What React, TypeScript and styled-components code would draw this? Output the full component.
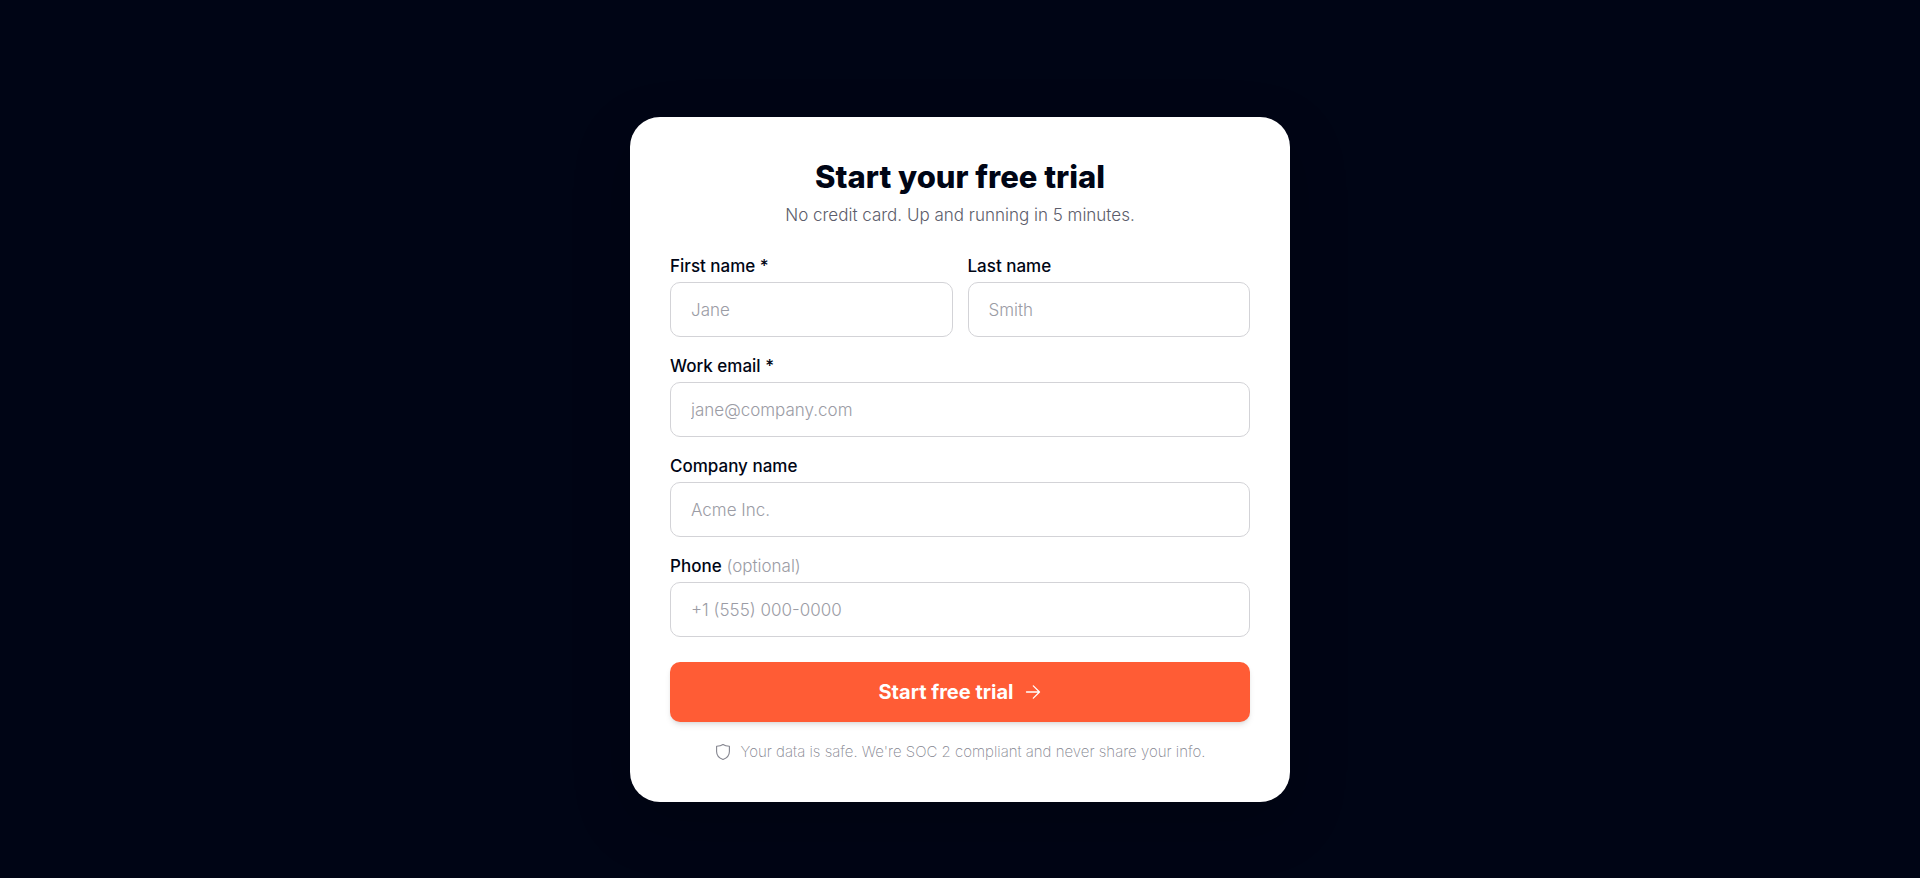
import React from "react";
import styled, { createGlobalStyle } from "styled-components";

const GlobalStyle = createGlobalStyle`
  *, *::before, *::after { box-sizing: border-box; }
  body {
    margin: 0;
    background: #000515;
    color: #000515;
    font-family: Inter, "Liberation Sans", sans-serif;
  }
`;

const Page = styled.main`
  min-height: 100vh;
  padding: 117px 24px 76px;
`;

const Card = styled.form`
  display: flex;
  flex-direction: column;
  width: 100%;
  max-width: 660px;
  margin: 0 auto;
  padding: 40px;
  border-radius: 30px;
  background: #fff;
  box-shadow: 0 20px 60px rgba(0, 0, 0, 0.2);
`;

const Title = styled.h1`
  margin: 0;
  font-size: 31px;
  font-weight: 800;
  line-height: 40px;
  text-align: center;
`;

const Subtitle = styled.p`
  margin: 6px 0 25px;
  font-size: 17px;
  font-weight: 300;
  line-height: 24px;
  text-align: center;
  color: #5c5d6b;
`;

const Fields = styled.div`
  display: grid;
  grid-template-columns: 1fr 1fr;
  gap: 15px;
`;

const Field = styled.div<{ $wide?: boolean }>`
  display: flex;
  flex-direction: column;
  gap: 2px;
  grid-column: ${(p) => (p.$wide ? "1 / -1" : "auto")};
`;

const Label = styled.label`
  font-size: 17px;
  font-weight: 500;
  line-height: 28px;
`;

const Optional = styled.span`
  font-weight: 300;
  color: #9b9ca5;
`;

const Input = styled.input`
  width: 100%;
  height: 55px;
  padding: 0 20px;
  border: 1px solid #d3d3d7;
  border-radius: 10px;
  background: #fff;
  color: inherit;
  font-family: inherit;
  font-size: 17px;
  font-weight: 300;

  &::placeholder { color: #9b9ca5; opacity: 1; }
`;

const SubmitButton = styled.button`
  display: flex;
  align-items: center;
  justify-content: center;
  gap: 12px;
  height: 60px;
  margin-top: 25px;
  border: 0;
  border-radius: 10px;
  background: #ff5c35;
  color: #fff;
  font-family: inherit;
  font-size: 20px;
  font-weight: 700;
  box-shadow: 0 4px 6px -1px rgba(0, 0, 0, 0.1), 0 2px 4px -2px rgba(0, 0, 0, 0.1);
  cursor: pointer;
`;

const Note = styled.p`
  display: flex;
  align-items: center;
  justify-content: center;
  gap: 10px;
  margin: 20px 0 0;
  font-size: 15px;
  font-weight: 200;
  line-height: 20px;
  color: #84858f;
`;

const ArrowIcon = () => (
  <svg width="16" height="16" viewBox="0 0 16 16" fill="none" stroke="currentColor" strokeWidth="1.3" strokeLinecap="round" strokeLinejoin="round" aria-hidden="true">
    <path d="M1.5 8H14.5M8.3 1.9L14.5 8L8.3 14.1" />
  </svg>
);

const ShieldIcon = () => (
  <svg width="16" height="18" viewBox="0 0 16 18" fill="none" stroke="currentColor" strokeWidth="1.1" strokeLinecap="round" strokeLinejoin="round" aria-hidden="true">
    <path d="M8 1.5C6.2 2.8 3.9 3.2 1.6 3.2V8.5C1.6 12.5 4.4 15.2 8 16.5C11.6 15.2 14.4 12.5 14.4 8.5V3.2C12.1 3.2 9.8 2.8 8 1.5Z" />
  </svg>
);

type FieldData = { id: string; label: string; placeholder: string; type: string; wide?: boolean; required?: boolean; optional?: boolean };

const fields: FieldData[] = [
  { id: "first-name", label: "First name *", placeholder: "Jane", type: "text", required: true },
  { id: "last-name", label: "Last name", placeholder: "Smith", type: "text" },
  { id: "email", label: "Work email *", placeholder: "jane@company.com", type: "email", wide: true, required: true },
  { id: "company", label: "Company name", placeholder: "Acme Inc.", type: "text", wide: true },
  { id: "phone", label: "Phone", placeholder: "+1 (555) 000-0000", type: "tel", wide: true, optional: true },
];

export default function App() {
  return (
    <>
      <GlobalStyle />
      <Page>
        <Card onSubmit={(e) => e.preventDefault()}>
          <Title>Start your free trial</Title>
          <Subtitle>No credit card. Up and running in 5 minutes.</Subtitle>
          <Fields>
            {fields.map((f) => (
              <Field key={f.id} $wide={f.wide}>
                <Label htmlFor={f.id}>
                  {f.label}
                  {f.optional && <Optional> (optional)</Optional>}
                </Label>
                <Input id={f.id} name={f.id} type={f.type} placeholder={f.placeholder} required={f.required} />
              </Field>
            ))}
          </Fields>
          <SubmitButton type="submit">
            Start free trial
            <ArrowIcon />
          </SubmitButton>
          <Note>
            <ShieldIcon />
            <span>Your data is safe. We're SOC 2 compliant and never share your info.</span>
          </Note>
        </Card>
      </Page>
    </>
  );
}
